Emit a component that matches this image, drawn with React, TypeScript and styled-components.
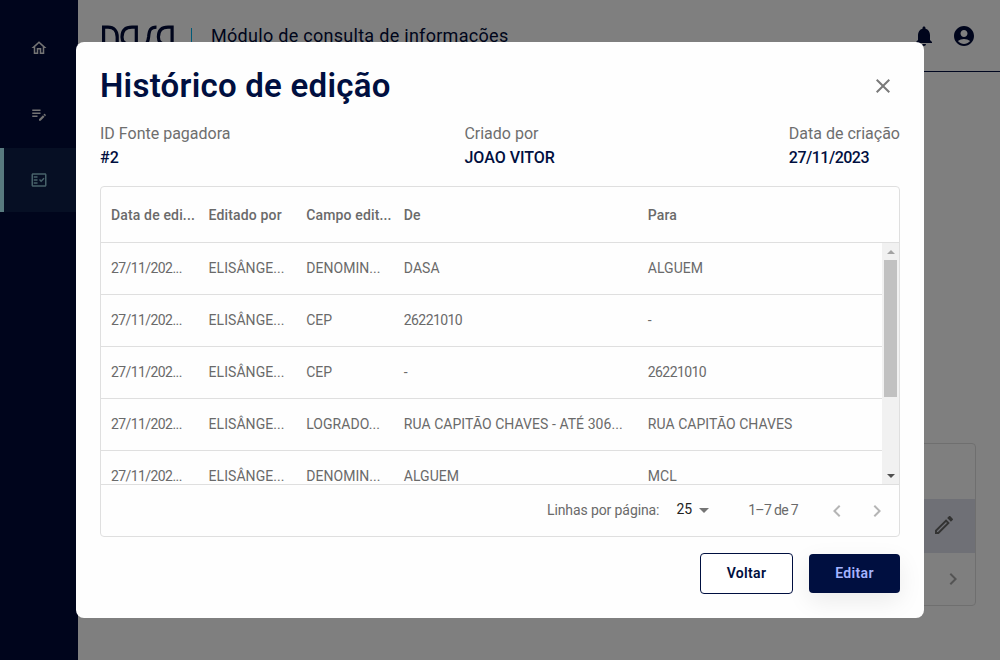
import React from "react";
import styled, { createGlobalStyle } from "styled-components";
import {
  MdOutlineHome,
  MdEditNote,
  MdOutlineFactCheck,
  MdNotifications,
  MdAccountCircle,
  MdOutlineEdit,
  MdClose,
  MdChevronLeft,
  MdChevronRight,
  MdArrowDropDown,
} from "react-icons/md";

const GlobalStyle = createGlobalStyle`
  * { box-sizing: border-box; }
  body { margin: 0; background: #fff; font-family: Roboto, "Liberation Sans", sans-serif; }
  svg { display: block; flex: none; }
`;

const Page = styled.div`
  display: flex;
  position: relative;
  width: 1000px;
  height: 660px;
  overflow: hidden;
  background: #fff;
`;

const Sidebar = styled.nav`
  display: flex;
  flex-direction: column;
  gap: 2px;
  width: 78px;
  padding-top: 16px;
  background: #000b38;
`;

const NavItem = styled.a<{ $active?: boolean }>`
  display: flex;
  align-items: center;
  justify-content: center;
  height: 64px;
  padding-right: 4px;
  padding-bottom: ${(p) => (p.$active ? 0 : 1)}px;
  border-left: 4px solid ${(p) => (p.$active ? "#b0f4ff" : "transparent")};
  background: ${(p) => (p.$active ? "#0c1e48" : "transparent")};
  color: ${(p) => (p.$active ? "#8fc4d4" : "#e8e8e8")};
`;

const Main = styled.div`
  display: flex;
  flex: 1;
  flex-direction: column;
`;

const Header = styled.header`
  display: flex;
  align-items: center;
  height: 72px;
  padding: 0 24px;
  border-bottom: 1px solid #000f40;
  color: #000b38;
`;

const Divider = styled.span`
  flex: none;
  width: 1px;
  height: 16px;
  margin: 0 18px 0 17px;
  background: #00b4f0;
`;

const ModuleName = styled.span`
  padding-left: 1px;
  font-size: 18px;
  line-height: 24px;
  letter-spacing: 0.29px;
`;

const HeaderActions = styled.div`
  display: flex;
  gap: 16px;
  margin-left: auto;
`;

const BackPanel = styled.section`
  width: 840px;
  height: 163px;
  margin: 371px 0 0 58px;
  border: 1px solid #dedede;
  border-radius: 4px;
`;

const BackRow = styled.div<{ $height: number; $selected?: boolean }>`
  display: flex;
  align-items: center;
  justify-content: flex-end;
  height: ${(p) => p.$height}px;
  padding-right: ${(p) => (p.$selected ? 19 : 10)}px;
  padding-bottom: ${(p) => (p.$selected ? 2 : 0)}px;
  background: ${(p) => (p.$selected ? "#dfe1ec" : "transparent")};
  color: ${(p) => (p.$selected ? "#666" : "#a8a8a8")};
`;

const Backdrop = styled.div`
  position: absolute;
  inset: 0;
  display: flex;
  align-items: center;
  justify-content: center;
  background: rgba(0, 0, 0, 0.5);
`;

const Dialog = styled.div`
  display: flex;
  flex-direction: column;
  width: 848px;
  height: 576px;
  padding: 24px;
  border-radius: 8px;
  background: #fefefe;
  overflow: hidden;
`;

const TitleRow = styled.div`
  display: flex;
  align-items: center;
  justify-content: space-between;
  height: 40px;
  padding-right: 5px;
  color: #7a7a7a;
`;

const Title = styled.h1`
  margin: 0;
  color: #000f40;
  font-size: 33px;
  font-weight: 600;
  line-height: 40px;
  letter-spacing: 0.25px;
`;

const Summary = styled.div`
  display: flex;
  justify-content: space-between;
  margin-top: 16px;
`;

const Fact = styled.div`
  display: flex;
  flex-direction: column;
  font-size: 16px;
  line-height: 24px;
`;

const FactLabel = styled.span`
  color: #6e6e6e;
`;

const FactValue = styled.span<{ $numeric: boolean }>`
  color: #000f40;
  font-weight: 500;
  letter-spacing: ${(p) => (p.$numeric ? "-0.5px" : "0")};
`;

const Grid = styled.div`
  display: flex;
  flex-direction: column;
  height: 351px;
  margin-top: 16px;
  border: 1px solid #dfdfdf;
  border-radius: 4px;
  color: #6a6a6a;
  font-size: 14px;
  overflow: hidden;
`;

const GridRow = styled.div<{ $head?: boolean }>`
  display: grid;
  grid-template-columns: 97.6px 97.6px 97.6px 244px 244px;
  flex: none;
  align-items: center;
  height: ${(p) => (p.$head ? 56 : 52)}px;
  padding-bottom: ${(p) => (p.$head ? 0 : 2)}px;
  border-bottom: 1px solid #dfdfdf;
  font-weight: ${(p) => (p.$head ? 500 : 400)};
  letter-spacing: ${(p) => (p.$head ? "0.15px" : "0.05px")};
`;

const Cell = styled.span<{ $numeric?: boolean }>`
  padding-left: 10px;
  line-height: 20px;
  letter-spacing: ${(p) => (p.$numeric ? "-0.58px" : "inherit")};
  white-space: nowrap;
`;

const GridBody = styled.div`
  display: flex;
  height: 242px;
  border-bottom: 1px solid #dfdfdf;
  overflow: hidden;
`;

const Rows = styled.div`
  display: flex;
  flex: 1;
  flex-direction: column;
`;

const Scrollbar = styled.div`
  display: flex;
  flex-direction: column;
  align-items: center;
  justify-content: space-between;
  width: 17px;
  background: #f1f1f1;
`;

const Thumb = styled.div`
  width: 13px;
  height: 137px;
  margin-bottom: auto;
  background: #c1c1c1;
`;

const ScrollButton = styled.div`
  display: flex;
  align-items: center;
  justify-content: center;
  width: 17px;
  height: 17px;
`;

const Pager = styled.div`
  display: flex;
  align-items: center;
  justify-content: flex-end;
  height: 51px;
  padding-right: 10px;
`;

const PagerText = styled.span<{ $numeric?: boolean }>`
  padding-bottom: 2px;
  letter-spacing: ${(p) => (p.$numeric ? "-0.65px" : "-0.1px")};
`;

const PageSize = styled.span`
  display: flex;
  align-items: center;
  margin: 0 32px 3px 17px;
  color: #222;

  svg { margin-top: 2px; color: #757575; }
`;

const PageArrows = styled.span`
  display: flex;
  gap: 16px;
  margin-left: 27px;
  color: #b5b5b5;
`;

const Actions = styled.div`
  display: flex;
  align-items: center;
  justify-content: flex-end;
  gap: 16px;
  margin-top: 16px;
`;

const Button = styled.button<{ $primary?: boolean }>`
  width: ${(p) => (p.$primary ? 91 : 93)}px;
  height: ${(p) => (p.$primary ? 39 : 41)}px;
  padding: 0 0 2px;
  border: ${(p) => (p.$primary ? "0" : "1px solid #000f40")};
  border-radius: 4px;
  background: ${(p) => (p.$primary ? "#000f40" : "#fff")};
  box-shadow: ${(p) => (p.$primary ? "0 8px 24px rgba(0, 0, 0, 0.08)" : "none")};
  color: ${(p) => (p.$primary ? "#a5b4ff" : "#000f40")};
  font: 600 14px/20px Roboto, "Liberation Sans", sans-serif;
  letter-spacing: 0.35px;
`;

const Logo = () => (
  <svg width="72" height="21" viewBox="0 0 72 21" fill="none" stroke="#000b38" strokeWidth="3.2">
    <path d="M1.600 21V2.100H6C12 2.100 15.200 6 15.200 12V21" />
    <path d="M34.300 21V2.100H30C23 2.100 20 6 20 12C20 17 23 19.400 28 19.400H34" />
    <path d="M41 19.400C45 19.400 46 17 46.600 12C47.200 5 48.500 2.100 54.500 2.100" />
    <path d="M70.100 21V2.100H66C59 2.100 56.400 6 56.400 12C56.400 17 59 19.400 64 19.400H70" />
  </svg>
);

const facts = [
  ["ID Fonte pagadora", "#2"],
  ["Criado por", "JOAO VITOR"],
  ["Data de criação", "27/11/2023"],
];

const columns = ["Data de edi...", "Editado por", "Campo edit...", "De", "Para"];

const rows = [
  ["27/11/202...", "ELISÂNGE...", "DENOMIN...", "DASA", "ALGUEM"],
  ["27/11/202...", "ELISÂNGE...", "CEP", "26221010", "-"],
  ["27/11/202...", "ELISÂNGE...", "CEP", "-", "26221010"],
  ["27/11/202...", "ELISÂNGE...", "LOGRADO...", "RUA CAPITÃO CHAVES - ATÉ 306...", "RUA CAPITÃO CHAVES"],
  ["27/11/202...", "ELISÂNGE...", "DENOMIN...", "ALGUEM", "MCL"],
];

const isNumeric = (text: string) => /^\d/.test(text);

export default function App() {
  return (
    <>
      <GlobalStyle />
      <Page>
        <Sidebar>
          <NavItem><MdOutlineHome size={18} /></NavItem>
          <NavItem><MdEditNote size={18} /></NavItem>
          <NavItem $active><MdOutlineFactCheck size={18} /></NavItem>
        </Sidebar>
        <Main>
          <Header>
            <Logo />
            <Divider />
            <ModuleName>Módulo de consulta de informações</ModuleName>
            <HeaderActions>
              <MdNotifications size={24} />
              <MdAccountCircle size={24} />
            </HeaderActions>
          </Header>
          <BackPanel>
            <BackRow $height={55} />
            <BackRow $height={54} $selected><MdOutlineEdit size={24} /></BackRow>
            <BackRow $height={52}><MdChevronRight size={24} /></BackRow>
          </BackPanel>
        </Main>
        <Backdrop>
          <Dialog role="dialog">
            <TitleRow>
              <Title>Histórico de edição</Title>
              <MdClose size={24} />
            </TitleRow>
            <Summary>
              {facts.map(([label, value]) => (
                <Fact key={label}>
                  <FactLabel>{label}</FactLabel>
                  <FactValue $numeric={isNumeric(value)}>{value}</FactValue>
                </Fact>
              ))}
            </Summary>
            <Grid>
              <GridRow $head>
                {columns.map((c) => <Cell key={c}>{c}</Cell>)}
              </GridRow>
              <GridBody>
                <Rows>
                  {rows.map((row, i) => (
                    <GridRow key={i}>
                      {row.map((text, j) => (
                        <Cell key={j} $numeric={isNumeric(text)}>{text}</Cell>
                      ))}
                    </GridRow>
                  ))}
                </Rows>
                <Scrollbar>
                  <ScrollButton>
                    <svg width="8" height="4" viewBox="0 0 8 4"><path d="M4 0L8 4H0Z" fill="#a3a3a3" /></svg>
                  </ScrollButton>
                  <Thumb />
                  <ScrollButton>
                    <svg width="8" height="4" viewBox="0 0 8 4"><path d="M0 0H8L4 4Z" fill="#505050" /></svg>
                  </ScrollButton>
                </Scrollbar>
              </GridBody>
              <Pager>
                <PagerText>Linhas por página:</PagerText>
                <PageSize>25<MdArrowDropDown size={24} /></PageSize>
                <PagerText $numeric>1–7 de 7</PagerText>
                <PageArrows>
                  <MdChevronLeft size={24} />
                  <MdChevronRight size={24} />
                </PageArrows>
              </Pager>
            </Grid>
            <Actions>
              <Button>Voltar</Button>
              <Button $primary>Editar</Button>
            </Actions>
          </Dialog>
        </Backdrop>
      </Page>
    </>
  );
}
